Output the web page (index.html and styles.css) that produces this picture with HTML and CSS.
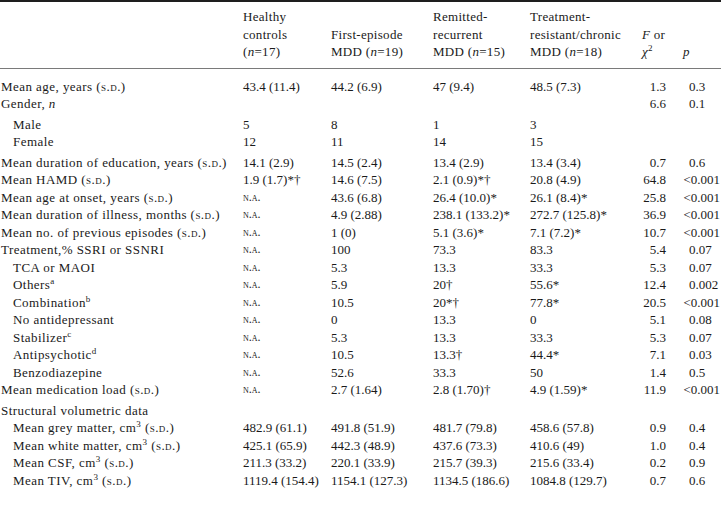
FILE: index.html
```html
<!DOCTYPE html>
<html lang="en">
<head>
<meta charset="utf-8">
<title>Demographic and clinical characteristics</title>
<link rel="stylesheet" href="styles.css">
</head>
<body>
<table class="tbl">
  <colgroup>
    <col class="c-label">
    <col class="c-hc">
    <col class="c-fe">
    <col class="c-rr">
    <col class="c-tr">
    <col class="c-f">
    <col class="c-p">
  </colgroup>
  <thead>
    <tr>
      <th></th>
      <th>Healthy<br>controls<br>(<i>n</i>=17)</th>
      <th>First-episode<br>MDD (<i>n</i>=19)</th>
      <th>Remitted-<br>recurrent<br>MDD (<i>n</i>=15)</th>
      <th>Treatment-<br>resistant/chronic<br>MDD (<i>n</i>=18)</th>
      <th class="f"><i>F</i> or<br><i>χ</i><sup>2</sup></th>
      <th class="p"><i>p</i></th>
    </tr>
  </thead>
  <tbody>
    <tr class="first"><td>Mean age, years (<span class="sc">s.d.</span>)</td><td>43.4 (11.4)</td><td>44.2 (6.9)</td><td>47 (9.4)</td><td>48.5 (7.3)</td><td class="f">1.3</td><td class="p">0.3</td></tr>
    <tr><td>Gender, <i>n</i></td><td></td><td></td><td></td><td></td><td class="f">6.6</td><td class="p">0.1</td></tr>
    <tr class="gap"><td class="ind">Male</td><td>5</td><td>8</td><td>1</td><td>3</td><td class="f"></td><td class="p"></td></tr>
    <tr><td class="ind">Female</td><td>12</td><td>11</td><td>14</td><td>15</td><td class="f"></td><td class="p"></td></tr>
    <tr class="gap"><td>Mean duration of education, years (<span class="sc">s.d.</span>)</td><td>14.1 (2.9)</td><td>14.5 (2.4)</td><td>13.4 (2.9)</td><td>13.4 (3.4)</td><td class="f">0.7</td><td class="p">0.6</td></tr>
    <tr><td>Mean HAMD (<span class="sc">s.d.</span>)</td><td>1.9 (1.7)*†</td><td>14.6 (7.5)</td><td>2.1 (0.9)*†</td><td>20.8 (4.9)</td><td class="f">64.8</td><td class="p lt">&lt;0.001</td></tr>
    <tr><td>Mean age at onset, years (<span class="sc">s.d.</span>)</td><td class="na">n.a.</td><td>43.6 (6.8)</td><td>26.4 (10.0)*</td><td>26.1 (8.4)*</td><td class="f">25.8</td><td class="p lt">&lt;0.001</td></tr>
    <tr><td>Mean duration of illness, months (<span class="sc">s.d.</span>)</td><td class="na">n.a.</td><td>4.9 (2.88)</td><td>238.1 (133.2)*</td><td>272.7 (125.8)*</td><td class="f">36.9</td><td class="p lt">&lt;0.001</td></tr>
    <tr><td>Mean no. of previous episodes (<span class="sc">s.d.</span>)</td><td class="na">n.a.</td><td>1 (0)</td><td>5.1 (3.6)*</td><td>7.1 (7.2)*</td><td class="f">10.7</td><td class="p lt">&lt;0.001</td></tr>
    <tr><td>Treatment,% SSRI or SSNRI</td><td class="na">n.a.</td><td>100</td><td>73.3</td><td>83.3</td><td class="f">5.4</td><td class="p">0.07</td></tr>
    <tr><td class="ind">TCA or MAOI</td><td class="na">n.a.</td><td>5.3</td><td>13.3</td><td>33.3</td><td class="f">5.3</td><td class="p">0.07</td></tr>
    <tr><td class="ind">Others<sup>a</sup></td><td class="na">n.a.</td><td>5.9</td><td>20†</td><td>55.6*</td><td class="f">12.4</td><td class="p">0.002</td></tr>
    <tr><td class="ind">Combination<sup>b</sup></td><td class="na">n.a.</td><td>10.5</td><td>20*†</td><td>77.8*</td><td class="f">20.5</td><td class="p lt">&lt;0.001</td></tr>
    <tr><td class="ind">No antidepressant</td><td class="na">n.a.</td><td>0</td><td>13.3</td><td>0</td><td class="f">5.1</td><td class="p">0.08</td></tr>
    <tr><td class="ind">Stabilizer<sup>c</sup></td><td class="na">n.a.</td><td>5.3</td><td>13.3</td><td>33.3</td><td class="f">5.3</td><td class="p">0.07</td></tr>
    <tr><td class="ind">Antipsychotic<sup>d</sup></td><td class="na">n.a.</td><td>10.5</td><td>13.3†</td><td>44.4*</td><td class="f">7.1</td><td class="p">0.03</td></tr>
    <tr><td class="ind">Benzodiazepine</td><td class="na">n.a.</td><td>52.6</td><td>33.3</td><td>50</td><td class="f">1.4</td><td class="p">0.5</td></tr>
    <tr><td>Mean medication load (<span class="sc">s.d.</span>)</td><td class="na">n.a.</td><td>2.7 (1.64)</td><td>2.8 (1.70)†</td><td>4.9 (1.59)*</td><td class="f">11.9</td><td class="p lt">&lt;0.001</td></tr>
    <tr class="gap"><td>Structural volumetric data</td><td></td><td></td><td></td><td></td><td class="f"></td><td class="p"></td></tr>
    <tr><td class="ind">Mean grey matter, cm<sup>3</sup> (<span class="sc">s.d.</span>)</td><td>482.9 (61.1)</td><td>491.8 (51.9)</td><td>481.7 (79.8)</td><td>458.6 (57.8)</td><td class="f">0.9</td><td class="p">0.4</td></tr>
    <tr><td class="ind">Mean white matter, cm<sup>3</sup> (<span class="sc">s.d.</span>)</td><td>425.1 (65.9)</td><td>442.3 (48.9)</td><td>437.6 (73.3)</td><td>410.6 (49)</td><td class="f">1.0</td><td class="p">0.4</td></tr>
    <tr><td class="ind">Mean CSF, cm<sup>3</sup> (<span class="sc">s.d.</span>)</td><td>211.3 (33.2)</td><td>220.1 (33.9)</td><td>215.7 (39.3)</td><td>215.6 (33.4)</td><td class="f">0.2</td><td class="p">0.9</td></tr>
    <tr class="last"><td class="ind">Mean TIV, cm<sup>3</sup> (<span class="sc">s.d.</span>)</td><td>1119.4 (154.4)</td><td>1154.1 (127.3)</td><td>1134.5 (186.6)</td><td>1084.8 (129.7)</td><td class="f">0.7</td><td class="p">0.6</td></tr>
  </tbody>
</table>
</body>
</html>
```
FILE: styles.css
```css
html, body {
  margin: 0;
  padding: 0;
  background: #ffffff;
}

body {
  font-family: "Liberation Serif", "Times New Roman", serif;
  font-size: 13px;
  color: #1a1a1a;
}

.tbl {
  width: 721px;
  border-collapse: collapse;
  table-layout: fixed;
  border-top: 2px solid #1e1e1e;
  border-bottom: 2px solid #707070;
}

.c-label { width: 243px; }
.c-hc { width: 88px; }
.c-fe { width: 102px; }
.c-rr { width: 97px; }
.c-tr { width: 109px; }
.c-f { width: 28px; }
.c-p { width: 54px; }

.tbl th,
.tbl td {
  padding: 0;
  text-align: left;
  white-space: nowrap;
  line-height: 17.5px;
  font-weight: normal;
}

.tbl thead th {
  vertical-align: bottom;
  padding-top: 6px;
  padding-bottom: 7px;
  letter-spacing: 0.3px;
  border-bottom: 1px solid #7a7a7a;
}

.tbl td:first-child {
  padding-left: 1px;
  letter-spacing: 0.45px;
}

.tbl td.ind {
  padding-left: 13px;
}

.tbl thead th.f {
  padding-left: 3px;
}

.tbl td.f {
  text-align: right;
  padding-right: 1px;
}

.tbl th.p {
  padding-left: 16px;
}

.tbl td.p {
  padding-left: 22px;
}

.tbl td.p.lt {
  padding-left: 0;
  padding-right: 1px;
  text-align: right;
}

.tbl tr.first td {
  padding-top: 9px;
}

.tbl tr.gap td {
  padding-top: 3px;
}

.tbl tr.last td {
  padding-bottom: 19px;
}

.sc {
  font-variant: small-caps;
}

.na {
  font-variant: small-caps;
  font-size: 12px;
}

sup {
  font-size: 9px;
  line-height: 0;
  vertical-align: 5px;
}

i {
  font-style: italic;
}
```
